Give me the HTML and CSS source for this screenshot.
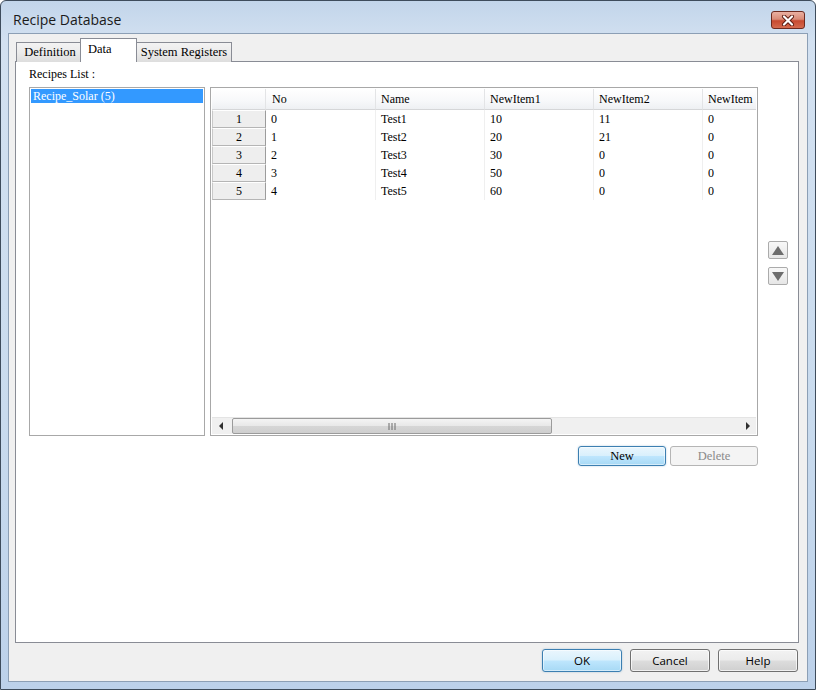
FILE: index.html
```html
<!DOCTYPE html>
<html>
<head>
<meta charset="utf-8">
<title>Recipe Database</title>
<link rel="stylesheet" href="styles.css">
</head>
<body>
<div class="window">
  <div class="titlebar">
    <div class="title">Recipe Database</div>
    <div class="close">
      <svg width="14" height="11" viewBox="0 0 14 11"><path d="M3 1.5 L11 9.5 M11 1.5 L3 9.5" stroke="#5a1a10" stroke-width="4" stroke-linecap="round"/><path d="M3 1.5 L11 9.5 M11 1.5 L3 9.5" stroke="#ffffff" stroke-width="2.2" stroke-linecap="round"/></svg>
    </div>
  </div>
  <div class="client">
    <div class="tabs">
      <div class="tab first">Definition</div>
      <div class="tab active">Data</div>
      <div class="tab last">System Registers</div>
    </div>
    <div class="panel">
      <div class="label">Recipes List :</div>
      <div class="content">
        <div class="listbox">
          <div class="item selected">Recipe_Solar (5)</div>
        </div>
        <div class="gridcol">
          <div class="grid">
            <div class="sheet">
              <table class="table">
                <colgroup>
                  <col class="c-rh"><col class="c-no"><col class="c-w"><col class="c-w"><col class="c-w"><col class="c-w">
                </colgroup>
                <thead>
                  <tr><th class="corner"></th><th>No</th><th>Name</th><th>NewItem1</th><th>NewItem2</th><th>NewItem</th></tr>
                </thead>
                <tbody>
                  <tr><td class="rh">1</td><td>0</td><td>Test1</td><td>10</td><td>11</td><td>0</td></tr>
                  <tr><td class="rh">2</td><td>1</td><td>Test2</td><td>20</td><td>21</td><td>0</td></tr>
                  <tr><td class="rh">3</td><td>2</td><td>Test3</td><td>30</td><td>0</td><td>0</td></tr>
                  <tr><td class="rh">4</td><td>3</td><td>Test4</td><td>50</td><td>0</td><td>0</td></tr>
                  <tr><td class="rh">5</td><td>4</td><td>Test5</td><td>60</td><td>0</td><td>0</td></tr>
                </tbody>
              </table>
            </div>
            <div class="hscroll">
              <div class="arrow">
                <svg width="5" height="8" viewBox="0 0 5 8"><path d="M4 0 L0 4 L4 8 Z" fill="#303030"/></svg>
              </div>
              <div class="thumb">
                <svg width="8" height="7" viewBox="0 0 8 7"><path d="M1 0 V7 M4 0 V7 M7 0 V7" stroke="#6a6a6a" stroke-width="1"/></svg>
              </div>
              <div class="track"></div>
              <div class="arrow">
                <svg width="5" height="8" viewBox="0 0 5 8"><path d="M1 0 L5 4 L1 8 Z" fill="#303030"/></svg>
              </div>
            </div>
          </div>
          <div class="actions">
            <button class="btn serif default">New</button>
            <button class="btn serif disabled">Delete</button>
          </div>
        </div>
        <div class="spin">
          <div class="spinbtn">
            <svg width="12" height="9" viewBox="0 0 12 9"><path d="M6 0 L12 9 L0 9 Z" fill="#6d6d6d"/></svg>
          </div>
          <div class="spinbtn">
            <svg width="12" height="9" viewBox="0 0 12 9"><path d="M0 0 L12 0 L6 9 Z" fill="#6d6d6d"/></svg>
          </div>
        </div>
      </div>
    </div>
    <div class="footer">
      <button class="btn sans default">OK</button>
      <button class="btn sans">Cancel</button>
      <button class="btn sans">Help</button>
    </div>
  </div>
</div>
</body>
</html>
```
FILE: styles.css
```css
* { box-sizing: border-box; }
html, body { margin: 0; padding: 0; background: #ffffff; }
body { width: 816px; height: 690px; overflow: hidden; font-family: "Liberation Serif", serif; }

.window {
  width: 816px;
  height: 690px;
  border: 1px solid #3e4c5c;
  border-radius: 6px 6px 0 0;
  background: linear-gradient(180deg, #c2d5ea 0%, #d3e1f1 6%, #c9dbee 60%, #bcd1ea 100%);
  display: flex;
  flex-direction: column;
}

.titlebar {
  height: 32px;
  display: flex;
  align-items: flex-start;
  justify-content: space-between;
  padding: 0 10px 0 12px;
}
.title {
  margin-top: 10px;
  font-family: "Open Sans", "Noto Sans", sans-serif;
  font-size: 14px;
  line-height: 18px;
  color: #1a1a1a;
}
.close {
  margin-top: 10px;
  width: 34px;
  height: 18px;
  border: 1px solid #6d2a1f;
  border-radius: 3px;
  background: linear-gradient(180deg, #eab0a2 0%, #d98b77 45%, #c74a30 55%, #d46a4f 100%);
  display: flex;
  align-items: center;
  justify-content: center;
}

.client {
  flex: 1;
  margin: 0 7px 7px 7px;
  border: 1px solid #8c9fb5;
  background: #f0f0f0;
  display: flex;
  flex-direction: column;
  padding: 4px 8px 9px 6px;
}

.tabs {
  display: flex;
  align-items: flex-end;
  padding-left: 1px;
  margin-bottom: -1px;
  position: relative;
  z-index: 1;
  height: 24px;
}
.tab {
  height: 20px;
  border: 1px solid #898c95;
  border-bottom: none;
  background: linear-gradient(180deg, #f3f3f3 0%, #ebebeb 50%, #dddddd 100%);
  font-size: 12.5px;
  line-height: 18px;
  color: #000;
  margin-left: -1px;
  white-space: nowrap;
  text-align: center;
  padding: 0;
}
.tab.first { margin-left: 0; width: 65px; padding-left: 3px; }
.tab.active {
  height: 24px;
  background: #ffffff;
  width: 57px;
  text-align: left;
  padding: 1px 0 0 7px;
}
.tab.last { width: 96px; }

.panel {
  flex: 1;
  border: 1px solid #898c95;
  background: #ffffff;
  padding: 5px 0 0 13px;
}
.label {
  font-size: 12px;
  line-height: 14px;
  margin-bottom: 6px;
}
.content { display: flex; align-items: flex-start; }

.listbox {
  width: 176px;
  height: 349px;
  border: 1px solid #a8a8a8;
  padding: 1px;
}
.item {
  height: 14px;
  font-size: 12px;
  line-height: 14px;
  padding-left: 2px;
}
.item.selected { background: #3399ff; color: #ffffff; }

.gridcol {
  margin-left: 5px;
  width: 548px;
  display: flex;
  flex-direction: column;
}
.grid {
  height: 349px;
  border: 1px solid #a8a8a8;
  padding: 1px;
  display: flex;
  flex-direction: column;
}
.sheet { flex: 1; overflow: hidden; }
.table {
  table-layout: fixed;
  width: 600px;
  border-collapse: separate;
  border-spacing: 0;
  font-size: 12px;
}
.c-rh { width: 54px; }
.c-no { width: 110px; }
.c-w { width: 109px; }
.table th {
  height: 21px;
  font-weight: normal;
  text-align: left;
  padding: 0 0 0 5px;
  background: linear-gradient(180deg, #ffffff 0%, #f7f8fa 60%, #eef0f3 100%);
  border-right: 1px solid #e3e4e6;
  border-bottom: 1px solid #d5d6d8;
  white-space: nowrap;
  overflow: hidden;
}
.table th:nth-child(2) { padding-left: 6px; }
.table th.corner { padding: 0; }
.table td {
  height: 18px;
  padding: 0 0 0 5px;
  line-height: 15px;
  border-right: 1px solid #efefef;
  white-space: nowrap;
  overflow: hidden;
}
.table td.rh {
  text-align: center;
  padding: 0;
  background: #eeeeee;
  border-top: 1px solid #ffffff;
  border-left: 1px solid #c9c9c9;
  border-right: 1px solid #9c9c9c;
  border-bottom: 1px solid #b5b5b5;
}

.hscroll {
  height: 17px;
  display: flex;
  background: #f0f0f0;
  border-top: 1px solid #e4e4e4;
}
.arrow {
  width: 18px;
  display: flex;
  align-items: center;
  justify-content: center;
}
.thumb {
  width: 320px;
  margin: 0 0 0 2px;
  border: 1px solid #9b9b9b;
  border-radius: 2px;
  background: linear-gradient(180deg, #f4f4f4 0%, #e8e8e8 50%, #d6d6d6 51%, #cfcfcf 100%);
  display: flex;
  align-items: center;
  justify-content: center;
}
.track { flex: 1; }

.actions {
  display: flex;
  justify-content: flex-end;
  gap: 4px;
  margin-top: 10px;
}

.spin {
  margin-left: 10px;
  height: 349px;
  padding-top: 3px;
  display: flex;
  flex-direction: column;
  justify-content: center;
  gap: 8px;
}
.spinbtn {
  width: 20px;
  height: 18px;
  border: 1px solid #ababab;
  border-radius: 2px;
  background: linear-gradient(180deg, #f8f8f8 0%, #e6e6e6 100%);
  display: flex;
  align-items: center;
  justify-content: center;
}

.btn {
  height: 20px;
  border: 1px solid #707070;
  border-radius: 3px;
  background: linear-gradient(180deg, #f2f2f2 0%, #ebebeb 48%, #dddddd 52%, #cfcfcf 100%);
  color: #000;
  padding: 0;
  margin: 0;
  cursor: default;
  box-shadow: inset 0 0 0 1px rgba(255,255,255,0.7);
}
.btn.serif {
  font-family: "Liberation Serif", serif;
  font-size: 12.5px;
  width: 88px;
}
.btn.default {
  border-color: #3c7fb1;
  background: linear-gradient(180deg, #eaf6fd 0%, #d9f0fc 48%, #bee6fd 52%, #a7d9f5 100%);
  box-shadow: inset 0 0 0 1px rgba(255,255,255,0.5), 0 0 2px rgba(60,127,177,0.4);
}
.btn.disabled {
  border-color: #b5b5b5;
  background: #f4f4f4;
  color: #8a8a8a;
  box-shadow: none;
}

.footer {
  display: flex;
  justify-content: flex-end;
  gap: 8px;
  margin-top: 6px;
  padding-right: 1px;
}
.btn.sans {
  font-family: "Open Sans", "Noto Sans", sans-serif;
  font-size: 11.5px;
  height: 23px;
  width: 80px;
}
```
